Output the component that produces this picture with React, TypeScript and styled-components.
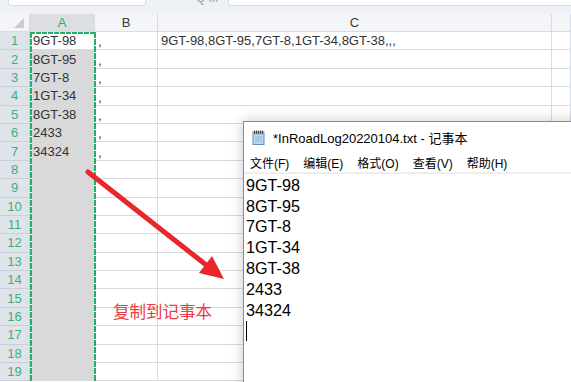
import styled, { createGlobalStyle } from "styled-components";

const GlobalStyle = createGlobalStyle`
  html, body {
    margin: 0;
    padding: 0;
    background: #ffffff;
  }
  body {
    font-family: "Liberation Sans", "Noto Sans CJK SC", sans-serif;
  }
`;

const COLUMNS = ["A", "B", "C", "D"];
const COLUMN_A = ["9GT-98", "8GT-95", "7GT-8", "1GT-34", "8GT-38", "2433", "34324"];
const JOINED = "9GT-98,8GT-95,7GT-8,1GT-34,8GT-38,,,";
const ROW_COUNT = 19;

const MENU = ["文件(F)", "编辑(E)", "格式(O)", "查看(V)", "帮助(H)"];

const GREEN = "#22b16c";
const GRID = "#d6dbe4";

const cellText = (row: number, col: string) => {
  if (col === "A") return COLUMN_A[row - 1] ?? "";
  if (col === "B") return row <= COLUMN_A.length ? "," : "";
  if (col === "C") return row === 1 ? JOINED : "";
  return "";
};

export default function App() {
  const rows = Array.from({ length: ROW_COUNT }, (_, i) => i + 1);

  return (
    <Screen>
      <GlobalStyle />
      <Sheet>
        <FormulaStrip>
          <NameBox />
          <FxLabel>Q fx</FxLabel>
          <FormulaBox />
        </FormulaStrip>
        <Grid>
          <Corner>
            <CornerMark />
          </Corner>
          {COLUMNS.map((col) => (
            <ColHead key={col} $selected={col === "A"}>
              {col === "D" ? "" : col}
            </ColHead>
          ))}
          {rows.map((row) => (
            <RowGroup key={row} row={row} />
          ))}
        </Grid>
      </Sheet>

      <Selection />

      <Arrow width="571" height="382" viewBox="0 0 571 382">
        <line
          x1="88"
          y1="172"
          x2="210"
          y2="268"
          stroke="#e8262b"
          strokeWidth="5"
          strokeLinecap="round"
        />
        <polygon points="224,279 199,273 212,256" fill="#e8262b" />
      </Arrow>

      <Note>复制到记事本</Note>

      <Notepad>
        <TitleBar>
          <NoteIcon width="13" height="15" viewBox="0 0 13 15">
            <rect x="1" y="2" width="11" height="12.5" fill="#bcd7ee" stroke="#5d8fbf" strokeWidth="1" />
            <rect x="1.5" y="2.5" width="10" height="2" fill="#7fa9d1" />
            {[2.5, 4.5, 6.5, 8.5, 10.5].map((x) => (
              <line key={x} x1={x} y1="0.5" x2={x} y2="3.5" stroke="#333" strokeWidth="0.9" />
            ))}
            {[7, 9, 11].map((y) => (
              <line key={y} x1="3" y1={y} x2="10" y2={y} stroke="#8fb2d3" strokeWidth="0.8" />
            ))}
          </NoteIcon>
          <Title>*InRoadLog20220104.txt - 记事本</Title>
        </TitleBar>
        <MenuBar>
          {MENU.map((item) => (
            <MenuItem key={item}>{item}</MenuItem>
          ))}
        </MenuBar>
        <Editor>
          {COLUMN_A.map((line) => (
            <EditorLine key={line}>{line}</EditorLine>
          ))}
          <EditorLine>
            <Caret />
          </EditorLine>
        </Editor>
      </Notepad>
    </Screen>
  );
}

const RowGroup = ({ row }: { row: number }) => (
  <>
    <RowHead>{row}</RowHead>
    {COLUMNS.map((col) => (
      <Cell key={col} $col={col} $active={row === 1 && col === "A"}>
        {cellText(row, col)}
      </Cell>
    ))}
  </>
);

const Screen = styled.div`
  position: relative;
  width: 571px;
  height: 382px;
  overflow: hidden;
  background: #ffffff;
`;

const Sheet = styled.div`
  display: flex;
  flex-direction: column;
`;

const FormulaStrip = styled.div`
  height: 14px;
  display: flex;
  align-items: flex-start;
  padding-left: 8px;
  background: #eef1f6;
  overflow: hidden;
`;

const NameBox = styled.div`
  width: 136px;
  height: 5px;
  background: #ffffff;
  border: 1px solid #d7dce3;
  border-top: none;
  border-radius: 0 0 3px 3px;
`;

const FxLabel = styled.span`
  width: 82px;
  padding-left: 50px;
  box-sizing: border-box;
  margin-top: -9px;
  font-size: 12px;
  color: #9aa0a8;
`;

const FormulaBox = styled.div`
  flex: 1;
  height: 5px;
  background: #ffffff;
  border: 1px solid #d7dce3;
  border-top: none;
  border-right: none;
  border-radius: 0 0 0 3px;
`;

const Grid = styled.div`
  display: grid;
  grid-template-columns: 30px 65px 63px 394px 1fr;
  grid-template-rows: 18px;
  grid-auto-rows: 18.4px;
`;

const Corner = styled.div`
  position: relative;
  background: #f3f5f8;
  border-right: 1px solid ${GRID};
  border-bottom: 1px solid ${GRID};
  box-sizing: border-box;
`;

const CornerMark = styled.div`
  position: absolute;
  right: 5px;
  bottom: 3px;
  width: 0;
  height: 0;
  border-left: 10px solid transparent;
  border-bottom: 10px solid #c9ccd1;
`;

const ColHead = styled.div<{ $selected: boolean }>`
  display: flex;
  align-items: center;
  justify-content: center;
  font-size: 13px;
  color: ${(p) => (p.$selected ? GREEN : "#3b3b3b")};
  background: ${(p) => (p.$selected ? "#dcdee2" : "#f3f5f8")};
  border-right: 1px solid ${GRID};
  border-bottom: 1px solid ${GRID};
  box-sizing: border-box;
`;

const RowHead = styled.div`
  display: flex;
  align-items: center;
  justify-content: center;
  font-size: 13px;
  color: #3fae7a;
  background: #dfe3ea;
  border-bottom: 1px solid #c9ced8;
  border-right: 1px solid #c9ced8;
  box-sizing: border-box;
`;

const Cell = styled.div<{ $col: string; $active: boolean }>`
  display: flex;
  align-items: ${(p) => (p.$col === "B" ? "flex-end" : "center")};
  padding: 0 3px;
  font-size: 13px;
  color: #333333;
  white-space: nowrap;
  overflow: visible;
  background: ${(p) => (p.$col === "A" && !p.$active ? "#d9d9d9" : "#ffffff")};
  border-right: 1px solid ${GRID};
  border-bottom: 1px solid ${GRID};
  box-sizing: border-box;
`;

const Selection = styled.div`
  position: absolute;
  left: 30px;
  top: 32px;
  width: 66px;
  bottom: 0;
  box-sizing: border-box;
  pointer-events: none;
  background: repeating-linear-gradient(
      to right,
      ${GREEN} 0 5px,
      #ffffff 5px 6px
    )
    top / 100% 2px no-repeat;

  &::before,
  &::after {
    content: "";
    position: absolute;
    top: 0;
    bottom: 0;
    width: 2px;
    background: repeating-linear-gradient(
      to bottom,
      ${GREEN} 0 6px,
      #ffffff 6px 7px
    );
  }
  &::before {
    left: 0;
  }
  &::after {
    right: 0;
  }
`;

const Arrow = styled.svg`
  position: absolute;
  left: 0;
  top: 0;
  pointer-events: none;
`;

const Note = styled.div`
  position: absolute;
  left: 113px;
  top: 301px;
  font-family: "Noto Sans CJK SC", sans-serif;
  font-size: 16.5px;
  line-height: 20px;
  color: #ec3a40;
`;

const Notepad = styled.div`
  position: absolute;
  left: 243px;
  top: 121px;
  right: -10px;
  bottom: -10px;
  display: flex;
  flex-direction: column;
  background: #ffffff;
  border: 1px solid #8a8a8a;
  box-shadow: 0 0 12px rgba(0, 0, 0, 0.22);
`;

const TitleBar = styled.div`
  height: 30px;
  display: flex;
  align-items: center;
  gap: 8px;
  padding-left: 8px;
`;

const NoteIcon = styled.svg`
  flex: none;
`;

const Title = styled.span`
  font-family: "Liberation Sans", "Noto Sans CJK SC", sans-serif;
  font-size: 13px;
  color: #000000;
`;

const MenuBar = styled.div`
  height: 20px;
  display: flex;
  align-items: center;
  gap: 14px;
  padding-left: 6px;
  border-bottom: 2px solid #eeeeee;
`;

const MenuItem = styled.span`
  font-family: "Liberation Sans", "Noto Sans CJK SC", sans-serif;
  font-size: 12px;
  color: #000000;
`;

const Editor = styled.div`
  padding: 1px 0 0 2px;
  display: flex;
  flex-direction: column;
`;

const EditorLine = styled.div`
  height: 20.8px;
  display: flex;
  align-items: center;
  font-family: "Liberation Sans", sans-serif;
  font-size: 16.2px;
  color: #000000;
`;

const Caret = styled.span`
  width: 1px;
  height: 20px;
  background: #000000;
`;
